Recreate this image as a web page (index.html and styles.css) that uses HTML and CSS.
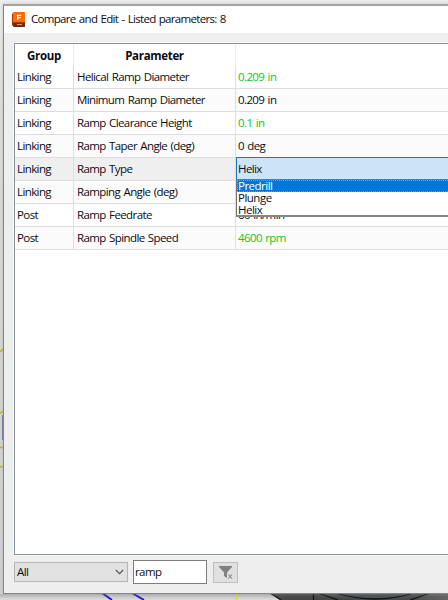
FILE: index.html
```html
<!DOCTYPE html>
<html lang="en">
<head>
<meta charset="utf-8">
<title>Compare and Edit</title>
<link rel="stylesheet" href="styles.css">
</head>
<body>
<svg class="canvas" width="448" height="600" viewBox="0 0 448 600">
  <defs>
    <linearGradient id="bg" x1="0" y1="0" x2="0" y2="1"><stop offset="0" stop-color="#f0f0f0"/><stop offset=".2" stop-color="#dededa"/><stop offset="1" stop-color="#d2d2d2"/></linearGradient>
    <linearGradient id="shade" x1="0" y1="0" x2="0" y2="1"><stop offset="0" stop-color="#b5b5b5"/><stop offset="1" stop-color="#dedede"/></linearGradient>
    <linearGradient id="part" x1="0" y1="0" x2="1" y2="0"><stop offset="0" stop-color="#484848"/><stop offset=".7" stop-color="#414344"/><stop offset="1" stop-color="#666"/></linearGradient>
  </defs>
  <rect width="448" height="600" fill="url(#bg)"/>
  <rect y="594" width="448" height="6" fill="url(#shade)"/>
  <path d="M0 352l4-4M0 413l4-2M0 447.500h4M0 467l4-1" stroke="#b8b51c" stroke-width="1.500"/>
  <path d="M3 415v25" stroke="#7777a8" stroke-width="2"/>
  <path d="M102 593l10 7M132 593l12 7" stroke="#1515dc" stroke-width="1.800"/>
  <path d="M236.500 594v6" stroke="#dede16" stroke-width="1.500"/>
  <path d="M270 593h178v7H281z" fill="url(#part)"/>
  <path d="M318 593Q376 609 430 593z" fill="#465155"/>
  <path d="M270 593l11 7M313.500 593v7M318 593l20 7M335 593Q376 605 414 593M430 593l-20 7" fill="none" stroke="#111" stroke-width="1.300"/>
</svg>
<main class="window">
  <header class="titlebar">
    <svg class="logo" width="14" height="15" viewBox="0 0 14 15">
      <path d="M1 1L0 2v11l2 2h10q1 0 1-1v-4H2z" fill="#a93606"/>
      <path d="M2 0h10q1 0 1 1v9.500H1V1q0-1 1-1z" fill="#ff6b08"/>
      <path d="M1 10.500h12V14q0 1-1 1H2l-1-1z" fill="#762807"/>
      <path d="M5.700 8V3.300h3.500M5.700 5.600h3" fill="none" stroke="#fff" stroke-width="1.300"/>
      <path d="M5 12.500h5" stroke="#c99880"/>
    </svg>
    <span class="title">Compare and Edit - Listed parameters: 8</span>
  </header>
  <section class="content">
    <div class="grid">
      <div class="row head"><span>Group</span><span>Parameter</span><span></span></div>
      <div class="row"><span>Linking</span><span>Helical Ramp Diameter</span><span class="green">0.209 in</span></div>
      <div class="row alt"><span>Linking</span><span>Minimum Ramp Diameter</span><span>0.209 in</span></div>
      <div class="row"><span>Linking</span><span>Ramp Clearance Height</span><span class="green">0.1 in</span></div>
      <div class="row alt"><span>Linking</span><span>Ramp Taper Angle (deg)</span><span>0 deg</span></div>
      <div class="row selected"><span>Linking</span><span>Ramp Type</span>
        <div class="editor">Helix
          <div class="menu"><div class="option active">Predrill</div><div class="option">Plunge</div><div class="option">Helix</div></div>
        </div>
      </div>
      <div class="row alt"><span>Linking</span><span>Ramping Angle (deg)</span><span></span></div>
      <div class="row"><span>Post</span><span>Ramp Feedrate</span><span>60 in/min</span></div>
      <div class="row alt"><span>Post</span><span>Ramp Spindle Speed</span><span class="green">4600 rpm</span></div>
    </div>
    <footer class="filters">
      <div class="combo">All<svg width="9" height="6" viewBox="0 0 9 6"><path d="M.8 1l3.700 3.700L8.200 1" fill="none" stroke="#555" stroke-width="1.100"/></svg></div>
      <div class="search">ramp</div>
      <div class="clear"><svg width="16" height="15" viewBox="0 0 16 15"><path d="M1 1h13v1L9 7.500V13l-3-2V7.500L1 2z" fill="#808080"/><path d="M10.300 9.500l3.700 4M14 9.500l-3.700 4" stroke="#858585" stroke-width="1.100"/></svg></div>
    </footer>
  </section>
</main>
<svg class="cursor" width="13" height="19" viewBox="0 0 13 19"><path d="M1 1v14.500l3.300-3 2.400 5 2.500-1.200L7 11.500h4.500z" fill="#fff" stroke="#26263a" stroke-width="1.100"/></svg>
</body>
</html>
```

FILE: styles.css
```css
* { box-sizing: border-box; }
body {
  margin: 0;
  width: 448px;
  height: 600px;
  overflow: hidden;
  position: relative;
  color: #0c0c14;
  font: 11.5px/14px "Open Sans", "Noto Sans", sans-serif;
  letter-spacing: -.6px;
  word-spacing: .9px;
  white-space: nowrap;
}
.canvas { position: absolute; left: 0; top: 0; }
.window {
  position: relative;
  margin: 4px 0 0 3px;
  width: 465px;
  height: 590px;
  display: flex;
  flex-direction: column;
  background: #eee;
  border: 1px solid #858585;
  border-top: 2px solid #a3a3a3;
  box-shadow: 0 0 4px #9998;
}
.titlebar { height: 27px; flex: none; background: #fff; display: flex; align-items: center; padding-left: 8px; gap: 5px; }
.title { margin-top: -1px; letter-spacing: -.68px; }
.content { flex: 1; padding: 10px 0 0 10px; }
.grid { height: 512px; background: #fff; border: 1px solid #8a929c; box-shadow: 0 0 0 1px #f8f8f8; }
.row { height: 23px; display: grid; grid-template-columns: 59px 162px 1fr; border-bottom: 1px solid #dedede; }
.row > span { padding: 4px 0 0 3px; border-right: 1px solid #dedede; }
.row > span:first-child { padding-left: 2px; }
.row > span:last-child { padding-left: 2px; border-right: 0; }
.row.head { height: 22px; border-bottom: 0; font-weight: 700; text-align: center; letter-spacing: -.32px; }
.row.head > span { border-color: #ededed; padding: 5px 0 0; }
.alt { background: #fbfbfb; }
.selected { background: #efefef; }
.row > .green { color: #10c51b; }
.editor { position: relative; height: 23px; margin-top: -1px; padding: 4px 0 0 1px; background: #cce4f7; border: 1px solid #2f75ad; border-bottom-color: #6c8da7; }
.menu { position: absolute; z-index: 2; top: 21px; left: -1px; right: 0; height: 38px; background: #fff; border: 1px solid #737373; border-bottom: 2px solid #858585; }
.option { height: 12px; line-height: 12px; padding-left: 1px; letter-spacing: -.5px; }
.active { color: #fff; background: #0078d7; outline: 1px dotted #c7894e; outline-offset: -1px; }
.filters { display: flex; align-items: center; height: 24px; margin-top: 5px; }
.combo { width: 114px; height: 20px; border: 1px solid #b4b4b4; background: #e1e1e1; display: flex; justify-content: space-between; align-items: center; padding: 0 3px 0 2px; }
.search { width: 74px; height: 24px; margin-left: 5px; padding: 4px 1px; background: #fff; border: 1px solid #7d7d7d; letter-spacing: -.6px; }
.clear { width: 25px; height: 21px; margin-left: 6px; background: #e0e0e0; border: 1px solid #bebebe; display: grid; place-items: center; }
.cursor { position: absolute; left: 317px; top: 187px; }
```
